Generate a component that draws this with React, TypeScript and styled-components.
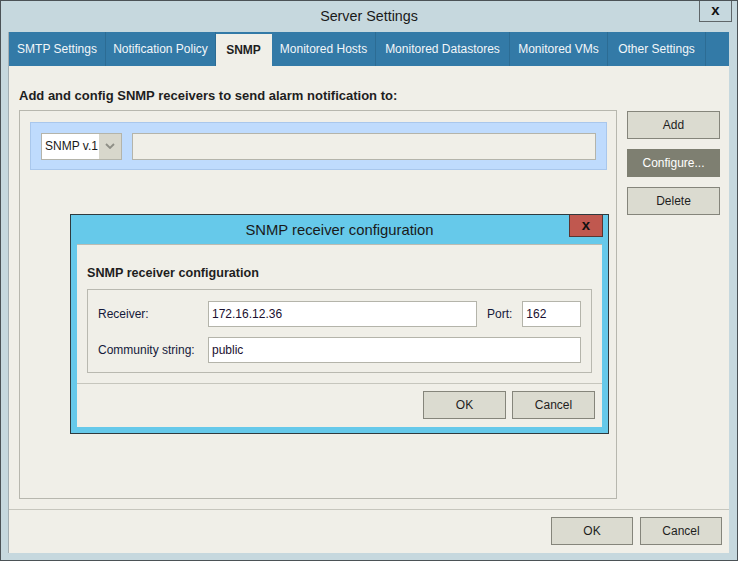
import React from 'react';
import styled, { createGlobalStyle } from 'styled-components';

const GlobalStyle = createGlobalStyle`
  body {
    margin: 0;
    padding: 0;
    background: #c6d8de;
    font-family: "Liberation Sans", Arial, sans-serif;
  }
`;

const Window = styled.div`
  width: 738px;
  height: 561px;
  box-sizing: border-box;
  border: 1px solid #4b5256;
  background: #c6d8de;
  display: flex;
  flex-direction: column;
`;

const TitleBar = styled.div`
  height: 30px;
  display: grid;
  grid-template-columns: 1fr auto 1fr;
  align-items: start;
`;

const TitleText = styled.div`
  grid-column: 2;
  font-family: "Liberation Sans", Arial, sans-serif;
  font-size: 14.3px;
  color: #1a1a1a;
  line-height: 30px;
`;

const WindowClose = styled.div`
  grid-column: 3;
  justify-self: end;
  margin-right: 5px;
  width: 33px;
  height: 21px;
  box-sizing: border-box;
  border: 1px solid #5f6669;
  border-top: none;
  display: flex;
  align-items: center;
  justify-content: center;
  font-weight: bold;
  font-size: 15px;
  color: #111;
  line-height: 1;
  padding-bottom: 3px;
`;

const Body = styled.div`
  flex: 1;
  margin: 1px 8px 8px 7px;
  border-left: 1px solid #a3aeb2;
  display: flex;
  flex-direction: column;
`;

const TabBar = styled.div`
  height: 34px;
  background: #337aa7;
  display: flex;
  align-items: stretch;
`;

const Tab = styled.div<{ $active?: boolean; $w: number }>`
  width: ${p => p.$w}px;
  box-sizing: border-box;
  display: flex;
  align-items: center;
  justify-content: center;
  font-size: 12px;
  color: ${p => (p.$active ? '#1e1e1e' : '#f2f6f9')};
  font-weight: ${p => (p.$active ? 'bold' : 'normal')};
  background: ${p => (p.$active ? '#f0efe8' : 'transparent')};
  margin-top: ${p => (p.$active ? '2px' : '0')};
  border-right: 1px solid ${p => (p.$active ? '#f0efe8' : '#2c6c94')};
`;

const Content = styled.div`
  position: relative;
  flex: 1;
  background: #f0efe8;
  display: flex;
  flex-direction: column;
`;

const Heading = styled.div`
  margin: 22px 0 6px 10px;
  font-size: 13px;
  font-weight: bold;
  line-height: 16px;
  color: #1e1e1e;
`;

const MainRow = styled.div`
  flex: 1;
  display: flex;
  gap: 10px;
  padding: 0 9px 0 10px;
`;

const ListBox = styled.div`
  width: 598px;
  height: 389px;
  box-sizing: border-box;
  border: 1px solid #b7b7ae;
  background: #f0efe8;
  padding: 11px 9px 0 10px;
`;

const ReceiverRow = styled.div`
  height: 48px;
  box-sizing: border-box;
  background: #bfdbfd;
  border: 1px solid #a9c7ec;
  display: flex;
  align-items: center;
  gap: 10px;
  padding: 0 10px;
`;

const Select = styled.div`
  width: 81px;
  height: 27px;
  box-sizing: border-box;
  border: 1px solid #b4b4aa;
  background: #fff;
  display: flex;
  align-items: stretch;
`;

const SelectValue = styled.div`
  flex: 1;
  display: flex;
  align-items: center;
  padding-left: 3px;
  font-size: 12px;
  color: #1a1a1a;
`;

const SelectArrow = styled.div`
  width: 22px;
  background: #d8d7cc;
  display: flex;
  align-items: center;
  justify-content: center;
`;

const DisabledField = styled.div`
  flex: 1;
  height: 27px;
  box-sizing: border-box;
  border: 1px solid #b4b4aa;
  background: #f0efe8;
`;

const SideButtons = styled.div`
  width: 93px;
  margin-top: 1px;
  display: flex;
  flex-direction: column;
  gap: 10px;
`;

const Button = styled.div<{ $primary?: boolean; $w?: number }>`
  width: ${p => (p.$w ? `${p.$w}px` : '100%')};
  height: 28px;
  box-sizing: border-box;
  border: 1px solid ${p => (p.$primary ? '#7e7f71' : '#85857b')};
  background: ${p => (p.$primary ? '#7e7f71' : '#dbdbd0')};
  color: ${p => (p.$primary ? '#ffffff' : '#1e1e1e')};
  font-size: 12px;
  display: flex;
  align-items: center;
  justify-content: center;
`;

const Separator = styled.div`
  height: 1px;
  background: #c6c6bd;
`;

const Footer = styled.div`
  display: flex;
  justify-content: flex-end;
  gap: 7px;
  padding: 7px 7px 8px 0;
`;

const MainSeparator = styled(Separator)`
  margin-top: 10px;
`;

/* modal dialog floating above the SNMP page */
const Dialog = styled.div`
  position: absolute;
  left: 61px;
  top: 148px;
  width: 539px;
  height: 220px;
  box-sizing: border-box;
  border: 1px solid #2f3a3e;
  background: #66c9ea;
  display: flex;
  flex-direction: column;
  padding: 0 6px 6px 6px;
`;

const DialogTitleBar = styled.div`
  height: 29px;
  display: grid;
  grid-template-columns: 1fr auto 1fr;
  align-items: start;
`;

const DialogTitle = styled.div`
  grid-column: 2;
  font-size: 14.8px;
  line-height: 31px;
  color: #1a1a1a;
`;

const DialogClose = styled.div`
  grid-column: 3;
  justify-self: end;
  margin-right: -1px;
  width: 34px;
  height: 22px;
  box-sizing: border-box;
  background: #c0584f;
  border: 1px solid #5b3531;
  border-top: none;
  display: flex;
  align-items: center;
  justify-content: center;
  font-weight: bold;
  font-size: 15px;
  line-height: 1;
  padding-bottom: 3px;
  color: #111;
`;

const DialogBody = styled.div`
  flex: 1;
  background: #f0efe8;
  border-top: 1px solid #bcbcb3;
  display: flex;
  flex-direction: column;
`;

const DialogHeading = styled.div`
  margin: 20px 10px 8px 10px;
  font-size: 12.6px;
  font-weight: bold;
  line-height: 16px;
  color: #1e1e1e;
`;

const GroupBox = styled.div`
  margin: 0 10px 10px 10px;
  height: 84px;
  box-sizing: border-box;
  border: 1px solid #b9b9b0;
  padding: 11px 10px 0 10px;
  display: flex;
  flex-direction: column;
  gap: 10px;
`;

const FieldRow = styled.div`
  display: flex;
  align-items: center;
`;

const Label = styled.div<{ $w?: number }>`
  width: ${p => (p.$w ? `${p.$w}px` : 'auto')};
  flex-shrink: 0;
  font-size: 12px;
  color: #14193a;
`;

const TextInput = styled.input<{ $w?: number }>`
  ${p => (p.$w ? `width: ${p.$w}px;` : 'flex: 1; min-width: 0;')}
  height: 26px;
  box-sizing: border-box;
  border: 1px solid #b4b4aa;
  background: #fff;
  font-family: "Liberation Sans", Arial, sans-serif;
  font-size: 12px;
  color: #1a1030;
  padding: 0 3px;
  margin: 0;
  outline: none;
`;

const PortLabel = styled(Label)`
  margin: 0 10px;
`;

const DialogFooter = styled.div`
  display: flex;
  justify-content: flex-end;
  gap: 6px;
  padding: 7px 7px 8px 0;
`;

const tabs = [
  { label: 'SMTP Settings', w: 97 },
  { label: 'Notification Policy', w: 110 },
  { label: 'SNMP', w: 56, active: true },
  { label: 'Monitored Hosts', w: 104 },
  { label: 'Monitored Datastores', w: 134 },
  { label: 'Monitored VMs', w: 98 },
  { label: 'Other Settings', w: 98 },
];

const ChevronDown = () => (
  <svg width="10" height="6" viewBox="0 0 10 6">
    <polyline points="1,1 5,5 9,1" fill="none" stroke="#8e8e86" strokeWidth="1.8" />
  </svg>
);

export default function App() {
  return (
    <>
      <GlobalStyle />
      <Window>
        <TitleBar>
          <TitleText>Server Settings</TitleText>
          <WindowClose>x</WindowClose>
        </TitleBar>
        <Body>
          <TabBar>
            {tabs.map(t => (
              <Tab key={t.label} $w={t.w} $active={t.active}>
                {t.label}
              </Tab>
            ))}
          </TabBar>
          <Content>
            <Heading>Add and config SNMP receivers to send alarm notification to:</Heading>
            <MainRow>
              <ListBox>
                <ReceiverRow>
                  <Select>
                    <SelectValue>SNMP v.1</SelectValue>
                    <SelectArrow>
                      <ChevronDown />
                    </SelectArrow>
                  </Select>
                  <DisabledField />
                </ReceiverRow>
              </ListBox>
              <SideButtons>
                <Button>Add</Button>
                <Button $primary>Configure...</Button>
                <Button>Delete</Button>
              </SideButtons>
            </MainRow>
            <MainSeparator />
            <Footer>
              <Button $w={82}>OK</Button>
              <Button $w={82}>Cancel</Button>
            </Footer>

            <Dialog>
              <DialogTitleBar>
                <DialogTitle>SNMP receiver configuration</DialogTitle>
                <DialogClose>x</DialogClose>
              </DialogTitleBar>
              <DialogBody>
                <DialogHeading>SNMP receiver configuration</DialogHeading>
                <GroupBox>
                  <FieldRow>
                    <Label $w={110}>Receiver:</Label>
                    <TextInput $w={269} defaultValue="172.16.12.36" readOnly />
                    <PortLabel>Port:</PortLabel>
                    <TextInput defaultValue="162" readOnly />
                  </FieldRow>
                  <FieldRow>
                    <Label $w={110}>Community string:</Label>
                    <TextInput defaultValue="public" readOnly />
                  </FieldRow>
                </GroupBox>
                <Separator />
                <DialogFooter>
                  <Button $w={83}>OK</Button>
                  <Button $w={83}>Cancel</Button>
                </DialogFooter>
              </DialogBody>
            </Dialog>
          </Content>
        </Body>
      </Window>
    </>
  );
}
